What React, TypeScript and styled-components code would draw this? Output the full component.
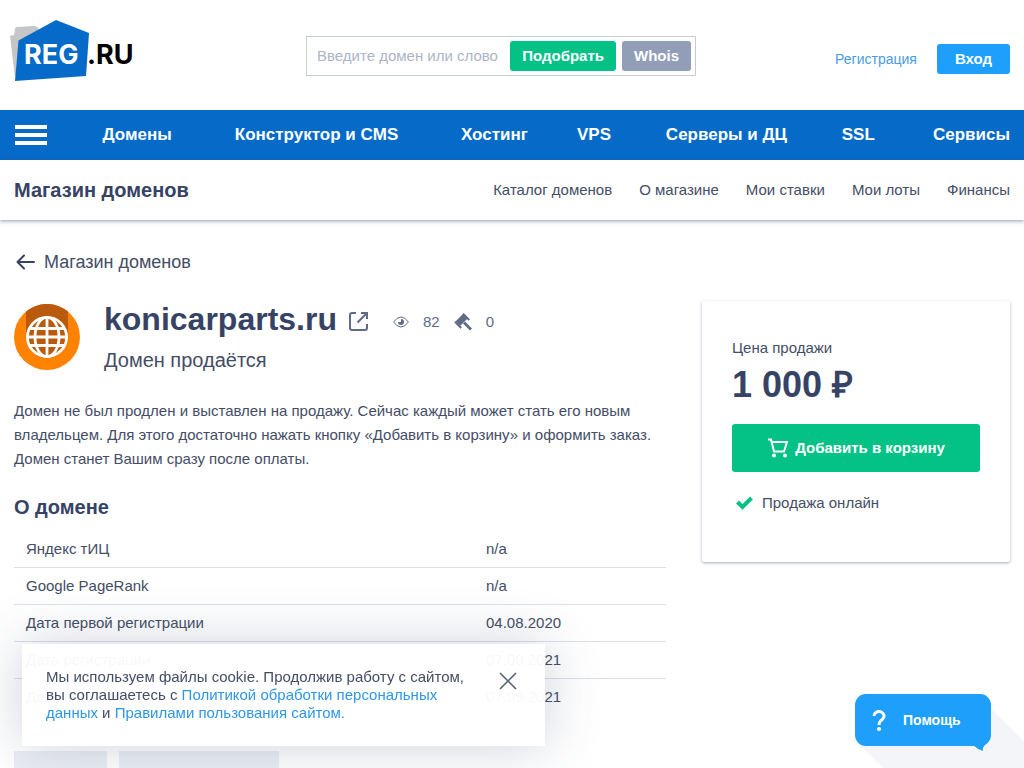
import React from "react";
import styled, { createGlobalStyle } from "styled-components";

const ink = "#364364";
const body = "#444d66";
const blue = "#066bc8";
const sky = "#1e9ffc";
const green = "#04c185";
const muted = "#5f6b87";

const GlobalStyle = createGlobalStyle`
  * { box-sizing: border-box; }
  body {
    margin: 0;
    background: #fff;
    color: ${body};
    font: 15px/18px "Liberation Sans", Arial, sans-serif;
  }
  h1, h2, p, ul { margin: 0; padding: 0; }
  ul { list-style: none; }
  a { text-decoration: none; color: inherit; }
  button { border: 0; padding: 0; cursor: pointer; font: inherit; }
  svg { display: block; flex: none; }
`;

const Page = styled.div`
  height: 100vh;
  overflow: hidden;
`;

const Header = styled.header`
  display: flex;
  align-items: center;
  height: 110px;
  padding: 2px 14px 0 10px;
`;

const LogoLink = styled.a`
  flex: 0 0 296px;
  padding-bottom: 10px;
`;

const Search = styled.form`
  display: flex;
  align-items: center;
  gap: 6px;
  flex: 0 1 390px;
  min-width: 0;
  height: 40px;
  padding: 0 4px 0 10px;
  border: 1px solid #c5cbd8;
`;

const SearchInput = styled.input`
  flex: 1;
  min-width: 0;
  border: 0;
  padding: 0;
  outline: 0;
  color: ${body};
  font: inherit;
  &::placeholder { color: #adb4c6; opacity: 1; }
`;

const Button = styled.button<{ $color: string; $pad?: number }>`
  height: 30px;
  padding: 0 ${(p) => p.$pad ?? 12}px;
  border-radius: 3px;
  background: ${(p) => p.$color};
  color: #fff;
  font-weight: bold;
`;

const Account = styled.div`
  display: flex;
  align-items: center;
  gap: 20px;
  margin-left: auto;
  padding-top: 6px;
`;

const RegisterLink = styled.a`
  color: #4b9ce2;
  font-size: 14px;
`;

const NavBar = styled.nav`
  display: flex;
  align-items: center;
  height: 50px;
  padding: 0 14px 0 15px;
  background: ${blue};
`;

const Burger = styled.button`
  flex: none;
  margin-right: 29px;
  background: none;
`;

const NavList = styled.ul`
  display: table;
  width: 100%;
`;

const NavItem = styled.li`
  display: table-cell;
  padding: 0 16px;
  text-align: center;
  white-space: nowrap;
  color: #fff;
  font-size: 17px;
  font-weight: bold;
  &:last-child { padding-right: 0; text-align: right; }
`;

const SubBar = styled.div`
  display: flex;
  align-items: center;
  justify-content: space-between;
  height: 60px;
  padding: 0 14px;
  box-shadow: 0 1px 4px rgba(54, 67, 120, 0.55);
`;

const SectionTitle = styled.a`
  color: ${ink};
  font-size: 20px;
  font-weight: bold;
`;

const SubLinks = styled.ul`
  display: flex;
  gap: 27px;
`;

const Main = styled.main`
  padding: 31px 14px 0;
`;

const BackLink = styled.a`
  display: inline-flex;
  align-items: center;
  gap: 8px;
  font-size: 18px;
  line-height: 22px;
`;

const Columns = styled.div`
  display: flex;
  align-items: flex-start;
  gap: 36px;
  margin-top: 27px;
`;

const Content = styled.article`
  flex: 1;
  min-width: 0;
`;

const DomainHead = styled.div`
  display: flex;
  gap: 24px;
  padding-top: 3px;
`;

const TitleRow = styled.div`
  display: flex;
  align-items: center;
  color: ${muted};
`;

const DomainName = styled.h1`
  margin-right: 12px;
  color: ${ink};
  font-size: 32px;
  line-height: 30px;
`;

const SiteLink = styled.a`
  padding-top: 4px;
`;

const Stats = styled.div`
  display: flex;
  align-items: center;
  padding: 6px 0 0 25px;
`;

const StatValue = styled.span`
  margin: 0 14px;
`;

const Status = styled.p`
  margin-top: 14px;
  font-size: 20px;
  line-height: 24px;
`;

const Description = styled.p`
  margin-top: 27px;
  line-height: 24px;
`;

const Heading = styled.h2`
  margin-top: 24px;
  color: ${ink};
  font-size: 20px;
  line-height: 24px;
`;

const Facts = styled.table`
  width: 100%;
  margin-top: 12px;
  border-collapse: separate;
  border-spacing: 0;
  th, td {
    height: 37px;
    padding: 0 12px;
    border-bottom: 1px solid #dcdfe6;
    font-weight: normal;
    text-align: left;
  }
  th { width: 460px; }
  tr:last-child > * { border-bottom-color: transparent; }
`;

const Tags = styled.div`
  display: flex;
  gap: 12px;
  margin-top: 35px;
`;

const Tag = styled.span<{ $width: number }>`
  width: ${(p) => p.$width}px;
  height: 30px;
  background: #eceef5;
`;

const PriceCard = styled.aside`
  flex: 0 0 308px;
  min-height: 261px;
  padding: 38px 30px;
  border-radius: 2px;
  box-shadow: 0 1px 3px rgba(54, 67, 120, 0.45);
`;

const Price = styled.p`
  margin-top: 8px;
  color: ${ink};
  font-size: 36px;
  font-weight: bold;
  line-height: 40px;
`;

const CartButton = styled.button`
  display: flex;
  align-items: center;
  justify-content: center;
  gap: 6px;
  width: 100%;
  height: 48px;
  margin-top: 19px;
  border-radius: 3px;
  background: ${green};
  color: #fff;
  font-weight: bold;
`;

const Perk = styled.p`
  display: flex;
  align-items: center;
  gap: 9px;
  margin-top: 22px;
  padding-left: 4px;
`;

const CookieNotice = styled.section`
  position: fixed;
  left: 22px;
  bottom: 22px;
  display: flex;
  align-items: flex-start;
  justify-content: space-between;
  width: 523px;
  padding: 24px 28px 24px 24px;
  background: rgba(255, 255, 255, 0.96);
  box-shadow: 0 0 54px rgba(54, 77, 110, 0.25);
`;

const CookieText = styled.p`
  width: 430px;
  a { color: #2f97e6; }
`;

const CloseButton = styled.button`
  padding-top: 4px;
  background: none;
`;

const Help = styled.div`
  position: fixed;
  right: 0;
  bottom: 0;
  padding: 0 33px 22px 0;
`;

const HelpShade = styled.svg`
  position: absolute;
  left: 0;
  top: 0;
`;

const HelpButton = styled.button`
  position: relative;
  display: flex;
  align-items: center;
  gap: 17px;
  width: 136px;
  height: 52px;
  padding-left: 17px;
  border-radius: 11px;
  background: ${sky};
  color: #fff;
  font-size: 14px;
  font-weight: bold;
`;

const HelpTail = styled.svg`
  position: absolute;
  right: 6px;
  top: 51px;
`;

const Logo = () => (
  <svg width="130" height="62" viewBox="0 0 130 62" role="img" aria-label="REG.RU">
    <path d="M0 16l4-1 1-6q0-2 2-2l17-1q2 0 3 1l3 3-12 10-13 38z" fill="#c4c6c8" />
    <path d="M46 0l33 13-3 43-71 5 3.500-40.500z" fill={blue} />
    <g fontFamily="Inter, sans-serif" fontWeight="bold" fontSize="27">
      <text x="14" y="44" fill="#fff">REG</text>
      <text x="77" y="44" fill="#000">.RU</text>
    </g>
  </svg>
);

const BurgerIcon = () => (
  <svg width="32" height="20" fill="#fff">
    <path d="M0 0h32v4H0zM0 8h32v4H0zM0 16h32v4H0z" />
  </svg>
);

const ArrowIcon = () => (
  <svg width="22" height="16" fill="none" stroke={ink} strokeWidth="2" strokeLinecap="round" strokeLinejoin="round">
    <path d="M20 8H4M10 1.500L3.500 8l6.500 6.500" />
  </svg>
);

const GlobeIcon = () => (
  <svg width="66" height="66" viewBox="0 0 66 66">
    <circle cx="33" cy="33" r="33" fill="#ff8300" />
    <path d="M12 7.500a33 33 0 0 1 42 0V33a21 21 0 0 1-42 0z" fill="#b95a0d" />
    <g fill="none" stroke="#fff" strokeWidth="2.800">
      <circle cx="33" cy="33" r="19.600" />
      <ellipse cx="33" cy="33" rx="12" ry="19.600" />
      <path d="M33 13v40M13 33h40M16 24.500h34M16 41.500h34" />
    </g>
  </svg>
);

const OpenIcon = () => (
  <svg width="19" height="19" fill="none" stroke={muted} strokeWidth="2">
    <path d="M7 1H3Q1 1 1 3v13q0 2 2 2h13q2 0 2-2v-4M12 1h6v6M18 1l-9.500 9.500" />
  </svg>
);

const EyeIcon = () => (
  <svg width="16" height="12" viewBox="0 0 16 12">
    <path d="M.6 6Q4 1 8 1t7.400 5Q12 11 8 11T.6 6z" fill="none" stroke={muted} />
    <path d="M8 3a3 3 0 1 1-3 3h3z" fill={muted} />
  </svg>
);

const GavelIcon = () => (
  <svg width="18" height="18" viewBox="0 0 18 18" stroke={muted} fill="none">
    <path d="M11 3.500L4 10.500" strokeWidth="6.500" />
    <path d="M9 .8l6.200 6.200M1 8.800L7.200 15" strokeWidth="2" />
    <path d="M10 9.500l7 7" strokeWidth="2.800" />
  </svg>
);

const CheckIcon = () => (
  <svg width="17" height="14" fill="none" stroke={green} strokeWidth="4">
    <path d="M1.500 6l5 5L15.500 2" />
  </svg>
);

const CartIcon = () => (
  <svg width="22" height="20" fill="none" stroke="#fff" strokeWidth="2" strokeLinejoin="round">
    <path d="M1 1.500h3l3 12h10l3-9.500H5" />
    <g fill="#fff" stroke="none">
      <circle cx="7" cy="17.500" r="2" />
      <circle cx="18" cy="17.500" r="2" />
    </g>
  </svg>
);

const CloseIcon = () => (
  <svg width="18" height="18" stroke="#5d6478" strokeWidth="1.700">
    <path d="M1 1l16 16M17 1L1 17" />
  </svg>
);

const QuestionIcon = () => (
  <svg width="14" height="21" fill="none" stroke="#fff" strokeWidth="3">
    <path d="M2 6a5 4.500 0 1 1 8.500 3.200Q7 11.500 7 15" />
    <circle cx="7" cy="19" r="2" fill="#fff" stroke="none" />
  </svg>
);

const sections = ["Домены", "Конструктор и CMS", "Хостинг", "VPS", "Серверы и ДЦ", "SSL", "Сервисы"];
const shopLinks = ["Каталог доменов", "О магазине", "Мои ставки", "Мои лоты", "Финансы"];
const facts = [
  ["Яндекс тИЦ", "n/a"],
  ["Google PageRank", "n/a"],
  ["Дата первой регистрации", "04.08.2020"],
  ["Дата регистрации", "07.09.2021"],
  ["Дата продления", "07.09.2021"],
];

export default function App() {
  return (
    <Page>
      <GlobalStyle />
      <Header>
        <LogoLink href="#"><Logo /></LogoLink>
        <Search onSubmit={(e) => e.preventDefault()}>
          <SearchInput aria-label="Введите домен или слово" placeholder="Введите домен или слово" />
          <Button $color={green}>Подобрать</Button>
          <Button $color="#929eb8" type="button">Whois</Button>
        </Search>
        <Account>
          <RegisterLink href="#">Регистрация</RegisterLink>
          <Button $color={sky} $pad={18}>Вход</Button>
        </Account>
      </Header>

      <NavBar>
        <Burger aria-label="Меню"><BurgerIcon /></Burger>
        <NavList>
          {sections.map((s) => <NavItem key={s}><a href="#">{s}</a></NavItem>)}
        </NavList>
      </NavBar>

      <SubBar>
        <SectionTitle href="#">Магазин доменов</SectionTitle>
        <SubLinks>
          {shopLinks.map((s) => <li key={s}><a href="#">{s}</a></li>)}
        </SubLinks>
      </SubBar>

      <Main>
        <BackLink href="#"><ArrowIcon />Магазин доменов</BackLink>
        <Columns>
          <Content>
            <DomainHead>
              <GlobeIcon />
              <div>
                <TitleRow>
                  <DomainName>konicarparts.ru</DomainName>
                  <SiteLink href="#" aria-label="Открыть сайт"><OpenIcon /></SiteLink>
                  <Stats>
                    <EyeIcon /><StatValue>82</StatValue>
                    <GavelIcon /><StatValue>0</StatValue>
                  </Stats>
                </TitleRow>
                <Status>Домен продаётся</Status>
              </div>
            </DomainHead>
            <Description>
              Домен не был продлен и выставлен на продажу. Сейчас каждый может стать его новым
              владельцем. Для этого достаточно нажать кнопку «Добавить в корзину» и оформить заказ.
              Домен станет Вашим сразу после оплаты.
            </Description>
            <Heading>О домене</Heading>
            <Facts>
              <tbody>
                {facts.map(([name, value]) => (
                  <tr key={name}><th scope="row">{name}</th><td>{value}</td></tr>
                ))}
              </tbody>
            </Facts>
            <Tags>
              <Tag $width={93} />
              <Tag $width={160} />
            </Tags>
          </Content>

          <PriceCard>
            <p>Цена продажи</p>
            <Price>1 000 ₽</Price>
            <CartButton><CartIcon />Добавить в корзину</CartButton>
            <Perk><CheckIcon />Продажа онлайн</Perk>
          </PriceCard>
        </Columns>
      </Main>

      <CookieNotice>
        <CookieText>
          Мы используем файлы cookie. Продолжив работу с сайтом, вы соглашаетесь с{" "}
          <a href="#">Политикой обработки персональных данных</a> и{" "}
          <a href="#">Правилами пользования сайтом.</a>
        </CookieText>
        <CloseButton aria-label="Закрыть"><CloseIcon /></CloseButton>
      </CookieNotice>

      <Help>
        <HelpShade width="169" height="74"><path d="M3 49l25 25h141V47L133 11z" fill="#f4f5f8" /></HelpShade>
        <HelpButton>
          <QuestionIcon />Помощь
          <HelpTail width="12" height="7"><path d="M0 0h12q-3 3-2 6Q4 4 0 0z" fill={sky} /></HelpTail>
        </HelpButton>
      </Help>
    </Page>
  );
}
